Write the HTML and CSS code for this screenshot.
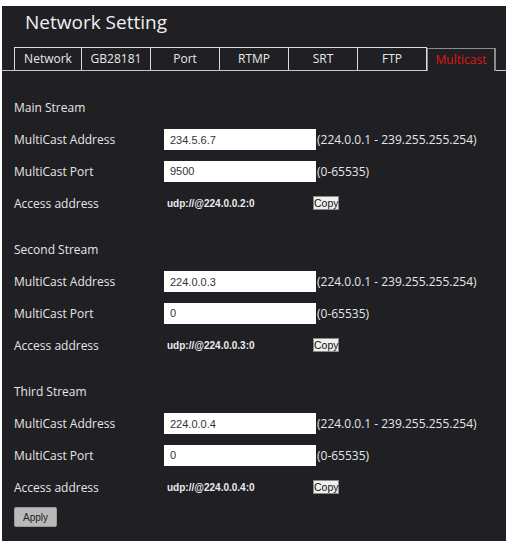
FILE: index.html
```html
<!DOCTYPE html>
<html>
<head>
<meta charset="utf-8">
<link rel="stylesheet" href="styles.css">
</head>
<body>
<div class="panel">
  <div class="title">Network Setting</div>
  <div class="tabs">
    <div class="tab">Network</div>
    <div class="tab">GB28181</div>
    <div class="tab">Port</div>
    <div class="tab">RTMP</div>
    <div class="tab">SRT</div>
    <div class="tab">FTP</div>
    <div class="tab active">Multicast</div>
  </div>
  <div class="content">
    <div class="section">
      <div class="row heading">Main Stream</div>
      <div class="row"><span class="label">MultiCast Address</span><input class="field" type="text" value="234.5.6.7"><span class="hint">(224.0.0.1 - 239.255.255.254)</span></div>
      <div class="row"><span class="label">MultiCast Port</span><input class="field" type="text" value="9500"><span class="hint">(0-65535)</span></div>
      <div class="row"><span class="label">Access address</span><span class="value">udp://@224.0.0.2:0</span><button class="copy">Copy</button></div>
    </div>
    <div class="section">
      <div class="row heading">Second Stream</div>
      <div class="row"><span class="label">MultiCast Address</span><input class="field" type="text" value="224.0.0.3"><span class="hint">(224.0.0.1 - 239.255.255.254)</span></div>
      <div class="row"><span class="label">MultiCast Port</span><input class="field" type="text" value="0"><span class="hint">(0-65535)</span></div>
      <div class="row"><span class="label">Access address</span><span class="value">udp://@224.0.0.3:0</span><button class="copy">Copy</button></div>
    </div>
    <div class="section">
      <div class="row heading">Third Stream</div>
      <div class="row"><span class="label">MultiCast Address</span><input class="field" type="text" value="224.0.0.4"><span class="hint">(224.0.0.1 - 239.255.255.254)</span></div>
      <div class="row"><span class="label">MultiCast Port</span><input class="field" type="text" value="0"><span class="hint">(0-65535)</span></div>
      <div class="row"><span class="label">Access address</span><span class="value">udp://@224.0.0.4:0</span><button class="copy">Copy</button></div>
    </div>
    <button class="apply">Apply</button>
  </div>
</div>
</body>
</html>
```
FILE: styles.css
```css
html, body {
  margin: 0;
  padding: 0;
  background: #ffffff;
}
.panel {
  margin: 6px 2px 0 2px;
  height: 535px;
  background: #201f23;
  color: #e6e6e6;
  font-family: "Open Sans", "Noto Sans", sans-serif;
  font-size: 12px;
  box-sizing: border-box;
  overflow: hidden;
}
.title {
  font-size: 19px;
  line-height: 26px;
  padding: 3px 0 0 23px;
  height: 38px;
  color: #f0f0f0;
}
.tabs {
  display: flex;
  padding-left: 12px;
  border-bottom: 1px solid #c8c8c8;
  height: 23px;
}
.tab {
  flex: none;
  width: 69px;
  height: 23px;
  box-sizing: border-box;
  border: 1px solid #dcdcdc;
  border-bottom: none;
  border-left: none;
  text-align: center;
  line-height: 22px;
  color: #e8e8e8;
}
.tab:first-child {
  border-left: 1px solid #dcdcdc;
  width: 68px;
}
.tabs .tab.active {
  color: #e01414;
  border: 1px solid #8c8c8c;
  border-right-width: 2px;
  border-bottom: none;
  margin-top: 1px;
  margin-bottom: -1px;
  height: 23px;
  background: #201f23;
  position: relative;
  z-index: 1;
}
.content {
  padding: 21px 0 0 12px;
}
.section {
  margin-bottom: 15px;
}
.section:last-of-type {
  margin-bottom: 0;
}
.row {
  display: flex;
  align-items: center;
  height: 31.75px;
}
.label {
  width: 150px;
  flex: none;
}
.field {
  width: 152px;
  height: 21px;
  box-sizing: border-box;
  border: 1px solid #ffffff;
  background: #ffffff;
  margin: 0;
  padding: 0 0 0 5px;
  font-family: "Liberation Sans", Arial, sans-serif;
  font-size: 11px;
  color: #333333;
  outline: none;
}
.hint {
  margin-left: 1px;
  color: #e6e6e6;
}
.value {
  width: 146px;
  padding-left: 3px;
  flex: none;
  font-family: "Liberation Sans", Arial, sans-serif;
  font-size: 10px;
  font-weight: bold;
  color: #ececec;
}
.copy {
  width: 26px;
  height: 14px;
  padding: 0;
  margin: 0;
  border: 1px solid #8a8a8a;
  background: #efefef;
  color: #111;
  font-family: "Liberation Sans", Arial, sans-serif;
  font-size: 10.5px;
  line-height: 12px;
}
.apply {
  display: block;
  margin-top: 4px;
  width: 43px;
  height: 20px;
  padding: 0;
  border: 1px solid #9a9a9a;
  border-radius: 2px;
  background: #b9b9b9;
  color: #222;
  font-family: "Liberation Sans", Arial, sans-serif;
  font-size: 10px;
}
```
